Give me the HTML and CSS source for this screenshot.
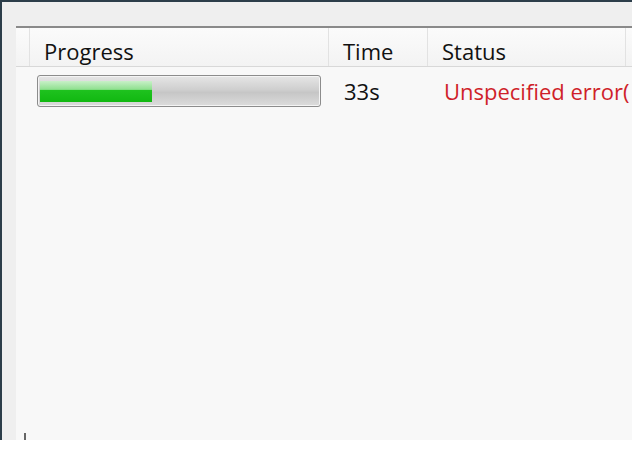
FILE: index.html
```html
<!DOCTYPE html>
<html>
<head>
<meta charset="utf-8">
<link rel="stylesheet" href="styles.css">
</head>
<body>
<div class="window">
  <div class="list">
    <div class="header">
      <div class="hcell lead"></div>
      <div class="hcell progress">Progress</div>
      <div class="hcell time">Time</div>
      <div class="hcell status">Status</div>
      <div class="hcell tail"></div>
    </div>
    <div class="row">
      <div class="cell progress">
        <div class="bar"><div class="fill" style="width:40.5%"></div></div>
      </div>
      <div class="cell time">33s</div>
      <div class="cell status">Unspecified error(</div>
    </div>
    <div class="mark"></div>
  </div>
</div>
</body>
</html>
```
FILE: styles.css
```css
html, body {
  margin: 0;
  padding: 0;
  background: #ffffff;
  font-family: "Open Sans", "Noto Sans", sans-serif;
}
.window {
  width: 632px;
  height: 440px;
  box-sizing: border-box;
  border-top: 2px solid #2c3e4a;
  border-left: 2px solid #2c3e4a;
  background: #efefef;
  padding: 24px 0 0 14px;
  display: flex;
  overflow: hidden;
}
.list {
  position: relative;
  flex: 1;
  min-width: 0;
  overflow: hidden;
  background: #f8f8f8;
  border-top: 2px solid #8a8a8a;
  height: 440px;
}
.header {
  display: flex;
  height: 38px;
  background: linear-gradient(#fbfbfb, #f3f3f3);
  border-bottom: 1px solid #d8d8d8;
}
.hcell {
  box-sizing: border-box;
  font-size: 22px;
  color: #111;
  line-height: 38px;
  padding-top: 4px;
  padding-left: 14px;
  border-right: 1px solid #e2e2e2;
  flex-shrink: 0;
}
.hcell.lead { width: 14px; padding: 0; }
.hcell.progress { width: 299px; }
.hcell.time { width: 99px; }
.hcell.status { width: 198px; }
.hcell.tail { flex: 1; flex-shrink: 1; border-right: 0; padding: 0; }
.row {
  display: flex;
  height: 42px;
  padding-top: 3px;
  align-items: center;
  font-size: 22px;
}
.cell.progress {
  width: 313px;
  flex-shrink: 0;
  padding-left: 21px;
  box-sizing: border-box;
}
.bar {
  width: 284px;
  height: 32px;
  box-sizing: border-box;
  border: 1px solid #8c8c8c;
  border-radius: 3px;
  background: linear-gradient(#e6e6e6, #cfcfcf 45%, #c6c6c6 55%, #dcdcdc);
  padding: 5px 3px 4px 2px;
  box-shadow: inset 0 0 0 1px #f4f4f4;
}
.fill {
  height: 100%;
  background: linear-gradient(#c8f0c8 0%, #8fe08f 40%, #1ec21e 45%, #11b811 100%);
}
.cell.time {
  width: 99px;
  flex-shrink: 0;
  padding-left: 15px;
  box-sizing: border-box;
  color: #111;
}
.cell.status {
  padding-left: 16px;
  color: #cf1f2a;
  white-space: nowrap;
}
.mark {
  position: absolute;
  left: 8px;
  top: 405px;
  width: 2px;
  height: 9px;
  background: #666;
}
```
